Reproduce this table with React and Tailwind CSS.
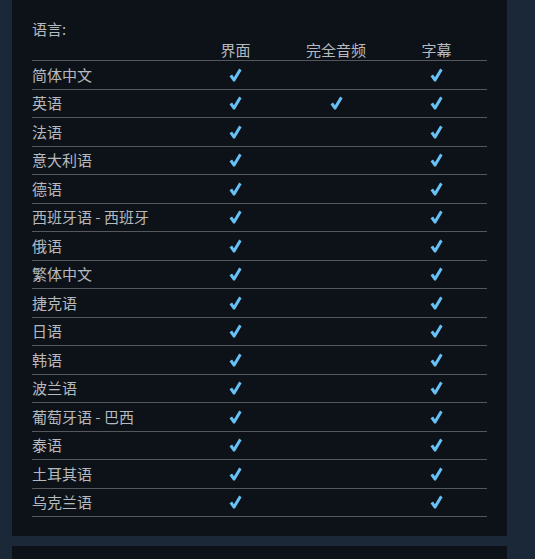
import React from "react";

const rows = [
  ["简体中文", true, false, true],
  ["英语", true, true, true],
  ["法语", true, false, true],
  ["意大利语", true, false, true],
  ["德语", true, false, true],
  ["西班牙语 - 西班牙", true, false, true],
  ["俄语", true, false, true],
  ["繁体中文", true, false, true],
  ["捷克语", true, false, true],
  ["日语", true, false, true],
  ["韩语", true, false, true],
  ["波兰语", true, false, true],
  ["葡萄牙语 - 巴西", true, false, true],
  ["泰语", true, false, true],
  ["土耳其语", true, false, true],
  ["乌克兰语", true, false, true],
];

function Check() {
  return (
    <svg width="13" height="14" viewBox="0 0 13 14" className="block">
      <path
        d="M0.5 8.2 L3.1 6.6 L4.9 9.2 L10.2 0.6 L12.6 2.2 L5.9 13.4 L4.2 13.4 Z"
        fill="#67c1f5"
      />
    </svg>
  );
}

export default function App() {
  return (
    <div
      className="w-[535px] h-[559px] overflow-hidden bg-[#1b2838] px-[12px]"
      style={{ fontFamily: '"Noto Sans CJK SC", "Noto Sans", sans-serif' }}
    >
      <div className="w-[495px] bg-[#0d1219] pt-[19px] pb-[19px] px-[20px] text-[#b6babf] text-[15px]">
        <div className="leading-[20px] h-[20px]">语言:</div>
        <div className="flex h-[22px] items-end leading-[21px] border-b border-[#54585d]">
          <div className="w-[153px]"></div>
          <div className="w-[101px] text-center">界面</div>
          <div className="w-[100px] text-center">完全音频</div>
          <div className="w-[101px] text-center">字幕</div>
        </div>
        {rows.map(([name, a, b, c], i) => (
          <div
            key={i}
            className="flex h-[28.5px] items-center border-b border-[#54585d] leading-[20px]"
          >
            <div className="w-[153px]">{name}</div>
            <div className="w-[101px] flex justify-center">{a && <Check />}</div>
            <div className="w-[100px] flex justify-center">{b && <Check />}</div>
            <div className="w-[101px] flex justify-center">{c && <Check />}</div>
          </div>
        ))}
      </div>
      <div className="w-[495px] h-[20px] mt-[10px] bg-[#0d1219]"></div>
    </div>
  );
}
